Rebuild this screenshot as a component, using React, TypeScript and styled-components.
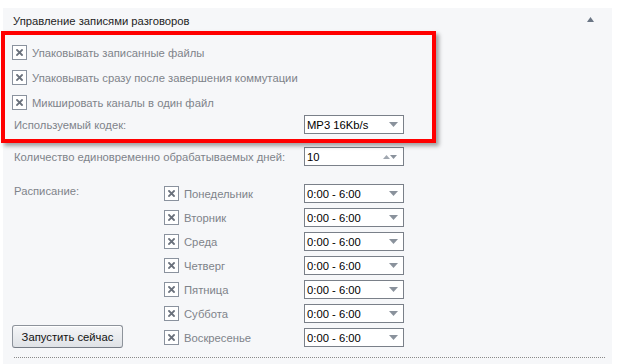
import React from "react";
import styled, { createGlobalStyle } from "styled-components";

const Global = createGlobalStyle`
  html, body { margin: 0; padding: 0; background: #ffffff; }
  body { font-family: "Liberation Sans", Arial, sans-serif; font-size: 11.25px; }
`;

const Page = styled.div`
  position: relative;
  width: 627px;
  height: 364px;
  overflow: hidden;
  padding: 8px 0 0 3px;
  box-sizing: border-box;
`;

const Panel = styled.div`
  position: relative;
  width: 609px;
  height: 400px;
  background: #f6f7f9;
  box-sizing: border-box;
  padding: 0 10px 0 9px;
`;

const Header = styled.div`
  height: 24px;
  display: flex;
  align-items: center;
  justify-content: space-between;
  padding: 0 8px 0 1px;
  margin-bottom: 8px;
`;

const Title = styled.span`
  color: #1e1e1e;
  font-size: 11.25px;
  padding-top: 1px;
`;

const Collapse = styled.svg`
  width: 7px;
  height: 5px;
  margin-top: -1px;
`;

const CheckRow = styled.label<{ $h?: number }>`
  display: flex;
  align-items: center;
  gap: 5px;
  height: ${(p) => p.$h ?? 25}px;
`;

const Box = styled.span`
  width: 15px;
  height: 15px;
  box-sizing: border-box;
  border: 1px solid #8a929e;
  background: #ffffff;
  display: inline-flex;
  align-items: center;
  justify-content: center;
  flex: none;
`;

const Label = styled.span`
  color: #7e838a;
  font-size: 11.25px;
  white-space: nowrap;
`;

const FieldRow = styled.div<{ $mt?: number }>`
  display: grid;
  grid-template-columns: 292px 100px;
  align-items: center;
  margin-top: ${(p) => p.$mt ?? 0}px;
`;

const FieldLabel = styled(Label)`
  padding-left: 2px;
`;

const Select = styled.div`
  width: 100px;
  height: 19px;
  box-sizing: border-box;
  border: 1px solid #7a8089;
  background: #ffffff;
  display: flex;
  align-items: center;
  justify-content: space-between;
  padding: 0 5px 0 2px;
  color: #000000;
  font-size: 11.25px;
`;

const Schedule = styled.div`
  display: grid;
  grid-template-columns: 152px 140px 100px;
  margin-top: 18px;
`;

const Side = styled.div`
  display: flex;
  flex-direction: column;
  justify-content: space-between;
`;

const SideLabel = styled(Label)`
  padding-left: 2px;
  line-height: 14px;
`;

const Days = styled.div`
  display: flex;
  flex-direction: column;
  gap: 5px;
`;

const Times = styled.div`
  display: flex;
  flex-direction: column;
  gap: 5px;
`;

const Button = styled.button`
  width: 111px;
  height: 23px;
  margin-bottom: -1px;
  border: 1px solid #8d939b;
  border-bottom-color: #767c85;
  border-radius: 3px;
  background: linear-gradient(#f5f6f8, #dfe2e6);
  box-shadow: inset 0 1px 0 #ffffff;
  font-family: "Liberation Sans", Arial, sans-serif;
  font-size: 11.25px;
  color: #111111;
  padding: 0;
`;

const Divider = styled.div`
  margin: 10px 0 0 2px;
  border-top: 1px dotted #8a8a8a;
  width: 591px;
`;

const Highlight = styled.div`
  position: absolute;
  left: 1px;
  top: 31px;
  width: 435px;
  height: 112px;
  box-sizing: border-box;
  border: 4px solid #ff0000;
  box-shadow: 3px 3px 4px rgba(0, 0, 0, 0.35);
  pointer-events: none;
`;

const XMark = () => (
  <svg width="7" height="7" viewBox="0 0 7 7">
    <path d="M1 1 L6 6 M6 1 L1 6" stroke="#6a717c" strokeWidth="1.8" strokeLinecap="square" />
  </svg>
);

const Check: React.FC<{ text: string; h?: number }> = ({ text, h }) => (
  <CheckRow $h={h}>
    <Box>
      <XMark />
    </Box>
    <Label>{text}</Label>
  </CheckRow>
);

const Down = () => (
  <svg width="9" height="5" viewBox="0 0 9 5">
    <path d="M0 0 H9 L4.5 5 Z" fill="#8a929c" />
  </svg>
);

const Spin = () => (
  <svg width="15" height="6" viewBox="0 0 15 6">
    <path d="M0 5 L3.5 1 L7 5 Z" fill="#a0a7b0" />
    <path d="M7 1 H14 L10.5 5 Z" fill="#8a929c" />
  </svg>
);

const days = ["Понедельник", "Вторник", "Среда", "Четверг", "Пятница", "Суббота", "Воскресенье"];

export default function App() {
  return (
    <>
      <Global />
      <Page>
        <Panel>
          <Header>
            <Title>Управление записями разговоров</Title>
            <Collapse viewBox="0 0 7 5">
              <path d="M3.5 0 L7 5 H0 Z" fill="#6b7685" />
            </Collapse>
          </Header>
          <Check text="Упаковывать записанные файлы" />
          <Check text="Упаковывать сразу после завершения коммутации" />
          <Check text="Микшировать каналы в один файл" />
          <FieldRow>
            <FieldLabel>Используемый кодек:</FieldLabel>
            <Select>
              <span>MP3 16Kb/s</span>
              <Down />
            </Select>
          </FieldRow>
          <FieldRow $mt={13}>
            <FieldLabel>Количество единовременно обрабатываемых дней:</FieldLabel>
            <Select>
              <span>10</span>
              <Spin />
            </Select>
          </FieldRow>
          <Schedule>
            <Side>
              <SideLabel>Расписание:</SideLabel>
              <Button>Запустить сейчас</Button>
            </Side>
            <Days>
              {days.map((d) => (
                <Check key={d} text={d} h={19} />
              ))}
            </Days>
            <Times>
              {days.map((d) => (
                <Select key={d}>
                  <span>0:00 - 6:00</span>
                  <Down />
                </Select>
              ))}
            </Times>
          </Schedule>
          <Divider />
        </Panel>
        <Highlight />
      </Page>
    </>
  );
}
